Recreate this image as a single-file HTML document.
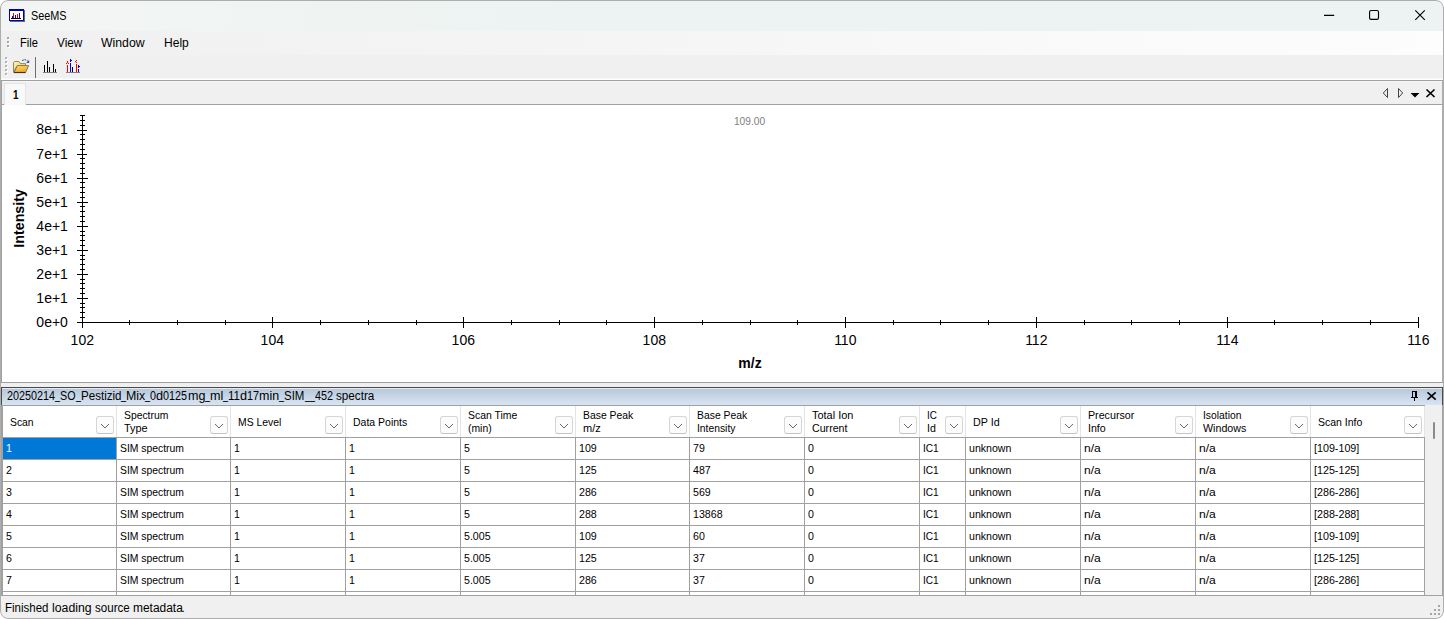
<!DOCTYPE html>
<html><head><meta charset="utf-8"><title>SeeMS</title><style>
html,body{margin:0;padding:0;background:#fff;}
body{width:1444px;height:619px;overflow:hidden;position:relative;font-family:"Liberation Sans",sans-serif;}
#win{position:absolute;left:0;top:0;width:1444px;height:619px;border-radius:8px;overflow:hidden;background:#f0f0f0;}
#ring{position:absolute;left:0;top:0;width:1442px;height:617px;border:1px solid #adadad;border-radius:8px;z-index:20}
.a{position:absolute;display:block}
.r{display:inline-block;white-space:pre;transform-origin:0 50%}
.t{position:absolute;white-space:pre;transform-origin:0 50%;display:block;z-index:3}
#titlebar{position:absolute;left:0;top:0;width:1444px;height:31px;background:linear-gradient(90deg,#f3f5f4 0,#eff4f3 22%,#edf3f2 40%,#edf3f2 100%)}
#menubar{position:absolute;left:0;top:31px;width:1444px;height:24px;background:linear-gradient(90deg,#f0f0f0,#f6f6f6 50%,#fdfdfd)}
#toolbar{position:absolute;left:0;top:55px;width:1444px;height:25px;background:linear-gradient(180deg,#f0f0f0 0,#f0f0f0 23px,#f5f8fb 23px,#f5f8fb 24px,#fff 24px)}
#tabstrip{position:absolute;left:1px;top:80px;width:1442px;height:25px;background:linear-gradient(180deg,#f7f7f7 0,#f7f7f7 1px,#f0f0f0 1px);border:1px solid #a0a0a0;border-right-color:#adadad;box-sizing:border-box}
#tab{position:absolute;left:4px;top:83px;width:20px;height:21px;background:#f9f9f9;border:1px solid #e4e4e4;border-bottom:0}
#chart{position:absolute;left:1px;top:105px;width:1442px;height:278px;box-sizing:border-box;background:#fff;border:1px solid #a0a0a0;border-top:0;border-right-color:#adadad}
#split{position:absolute;left:1px;top:383px;width:1442px;height:4px;background:#f0f0f0}
#cap{position:absolute;left:1px;top:387px;width:1442px;height:18px;box-sizing:border-box;border:1px solid #4a4a4a;border-bottom:0;background:linear-gradient(180deg,#e4ebf4 0,#e4ebf4 1px,#b9c9da 1px,#d7e4f2 100%)}
#gridwrap{position:absolute;left:1px;top:405px;width:1442px;height:190px;background:#a0a0a0}
#grid{position:absolute;left:3px;top:405px;width:1422px;height:190px;box-sizing:border-box;border-top:1px solid #a0a0a0;background:#fff}
.dd{position:absolute;top:416px;width:16px;height:16px;border:1px solid #d6d6d6;border-bottom-color:#c4c4c4;border-radius:3px;background:#fcfcfc}
#status{position:absolute;left:1px;top:595px;width:1442px;height:23px;box-sizing:border-box;border-top:1px solid #a0a0a0;background:#f0f0f0}
</style></head><body>
<div id="win">
<div id="titlebar"></div><div id="menubar"></div><div id="toolbar"></div>
<svg class="a" style="left:9px;top:9px" width="16" height="13" shape-rendering="crispEdges">
<rect x="1" y="1" width="15" height="12" fill="#6a6a6a"/>
<rect x="0" y="0" width="15" height="12" fill="#0000b8"/>
<rect x="1" y="2" width="13" height="9" fill="#fff"/>
<rect x="2" y="9" width="10" height="1" fill="#000"/>
<rect x="3" y="7" width="1" height="2" fill="#00f"/>
<rect x="4" y="4" width="1" height="5" fill="#f00"/>
<rect x="6" y="6" width="1" height="3" fill="#00f"/>
<rect x="8" y="5" width="1" height="4" fill="#f00"/>
<rect x="10" y="4" width="1" height="5" fill="#00f"/>
</svg>
<span class="t" style="left:31px;top:9.84px;font-size:12px;line-height:12px;height:12px;font-weight:400;color:#000;transform:scaleX(0.904);">SeeMS</span>
<svg class="a" style="left:1310px;top:0" width="130" height="31" fill="none" stroke="#000" stroke-width="1.15">
<path d="M14 15.4H24.2"/>
<rect x="59.55" y="10.5" width="8.95" height="8.9" rx="1.6"/>
<path d="M105.3 10.3L114.8 19.8M114.8 10.3L105.3 19.8"/>
</svg>
<svg class="a" style="left:0;top:31px" width="12" height="24" shape-rendering="crispEdges"><rect x="8" y="7" width="2" height="2" fill="#fff"/><rect x="7" y="6" width="2" height="2" fill="#a8a8a8"/><rect x="8" y="11" width="2" height="2" fill="#fff"/><rect x="7" y="10" width="2" height="2" fill="#a8a8a8"/><rect x="8" y="15" width="2" height="2" fill="#fff"/><rect x="7" y="14" width="2" height="2" fill="#a8a8a8"/></svg>
<span class="t" style="left:20px;top:36.84px;font-size:12px;line-height:12px;height:12px;font-weight:400;color:#000;transform:scaleX(0.928);">File</span>
<span class="t" style="left:57px;top:36.84px;font-size:12px;line-height:12px;height:12px;font-weight:400;color:#000;transform:scaleX(0.980);">View</span>
<span class="t" style="left:101px;top:36.84px;font-size:12px;line-height:12px;height:12px;font-weight:400;color:#000;transform:scaleX(1.022);">Window</span>
<span class="t" style="left:164px;top:36.84px;font-size:12px;line-height:12px;height:12px;font-weight:400;color:#000;transform:scaleX(1.003);">Help</span>
<svg class="a" style="left:0;top:55px" width="12" height="25" shape-rendering="crispEdges"><rect x="6" y="3" width="2" height="2" fill="#fff"/><rect x="5" y="2" width="2" height="2" fill="#c2c2c2"/><rect x="6" y="2" width="1" height="1" fill="#a6a6a6"/><rect x="5" y="3" width="1" height="1" fill="#a6a6a6"/><rect x="6" y="7" width="2" height="2" fill="#fff"/><rect x="5" y="6" width="2" height="2" fill="#c2c2c2"/><rect x="6" y="6" width="1" height="1" fill="#a6a6a6"/><rect x="5" y="7" width="1" height="1" fill="#a6a6a6"/><rect x="6" y="11" width="2" height="2" fill="#fff"/><rect x="5" y="10" width="2" height="2" fill="#c2c2c2"/><rect x="6" y="10" width="1" height="1" fill="#a6a6a6"/><rect x="5" y="11" width="1" height="1" fill="#a6a6a6"/><rect x="6" y="15" width="2" height="2" fill="#fff"/><rect x="5" y="14" width="2" height="2" fill="#c2c2c2"/><rect x="6" y="14" width="1" height="1" fill="#a6a6a6"/><rect x="5" y="15" width="1" height="1" fill="#a6a6a6"/><rect x="6" y="19" width="2" height="2" fill="#fff"/><rect x="5" y="18" width="2" height="2" fill="#c2c2c2"/><rect x="6" y="18" width="1" height="1" fill="#a6a6a6"/><rect x="5" y="19" width="1" height="1" fill="#a6a6a6"/></svg>
<svg class="a" style="left:13px;top:58px" width="17" height="16">
<defs><linearGradient id="fg" x1="0" y1="0" x2="0.3" y2="1"><stop offset="0" stop-color="#ffdf70"/><stop offset="1" stop-color="#f0a62a"/></linearGradient>
<linearGradient id="fb" x1="0" y1="0" x2="1" y2="1"><stop offset="0" stop-color="#fff4a8"/><stop offset="1" stop-color="#f2cc58"/></linearGradient></defs>
<path d="M0.5 14.3V4.3L1.3 3.5H6L7.3 5.6H12.5V8H4L0.5 14.3Z" fill="url(#fb)" stroke="#968663" stroke-width="1"/>
<path d="M4.3 7.6H15.6L12.5 14.4H1Z" fill="url(#fg)" stroke="#85754f" stroke-width="1"/>
<path d="M1 14.6H12.6" stroke="#2a2418" stroke-width="0.9"/>
<path d="M9.3 2.9C10.6 1.2 13 1.2 14.6 3.2" fill="none" stroke="#3f5f9c" stroke-width="1.1" stroke-dasharray="1.6 0.9"/>
<path d="M16.2 2L16.2 4.9L13.1 4.9Z" fill="#34508e"/>
</svg>
<div class="a" style="left:35px;top:57px;width:1px;height:21px;background:#6e6e6e"></div>
<svg class="a" style="left:43px;top:55px" width="16" height="25" shape-rendering="crispEdges"><rect x="0" y="17" width="14" height="1" fill="#808080"/><rect x="1" y="10" width="1" height="7" fill="#000"/><rect x="4" y="6" width="1" height="11" fill="#000"/><rect x="6" y="12" width="1" height="5" fill="#000"/><rect x="10" y="9" width="1" height="8" fill="#000"/><rect x="12" y="14" width="1" height="3" fill="#000"/></svg>
<svg class="a" style="left:65px;top:55px" width="17" height="25" shape-rendering="crispEdges"><rect x="1" y="17" width="14" height="1" fill="#808080"/><rect x="2" y="10" width="1" height="7" fill="#f00"/><rect x="5" y="8" width="1" height="9" fill="#00f"/><rect x="7" y="12" width="1" height="5" fill="#000"/><rect x="11" y="9" width="1" height="8" fill="#f00"/><rect x="13" y="14" width="1" height="3" fill="#00f"/><rect x="2" y="6" width="1" height="2" fill="#f00"/><rect x="1" y="8" width="1" height="1" fill="#f00"/><rect x="3" y="8" width="1" height="1" fill="#f00"/><rect x="5" y="4" width="1" height="3" fill="#00f"/><rect x="6" y="5" width="1" height="1" fill="#00f"/><rect x="11" y="5" width="1" height="1" fill="#f00"/><rect x="10" y="6" width="1" height="1" fill="#f00"/><rect x="11" y="7" width="1" height="1" fill="#f00"/><rect x="13" y="10" width="1" height="3" fill="#00f"/><rect x="14" y="11" width="1" height="1" fill="#00f"/></svg>
<div id="tabstrip"></div><div id="tab"></div>
<span class="t" style="left:12.5px;top:88.84px;font-size:12px;line-height:12px;height:12px;font-weight:700;color:#000;transform:scaleX(0.822);">1</span>
<svg class="a" style="left:1380px;top:84px" width="60" height="18">
<path d="M7.5 4.5V13.5L3.3 9Z" fill="none" stroke="#444" stroke-width="1"/>
<path d="M18.5 4.5V13.5L22.7 9Z" fill="none" stroke="#444" stroke-width="1"/>
<path d="M30.6 9H39.4L35 13.4Z" fill="#000"/>
<path d="M46.5 5.5L54.5 13M54.5 5.5L46.5 13" stroke="#000" stroke-width="1.7" fill="none"/>
</svg>
<div id="chart"></div>
<svg class="a" style="left:0;top:105px" width="1444" height="278" font-family="Liberation Sans, sans-serif"><g shape-rendering="crispEdges" fill="#000"><rect x="82" y="10" width="1" height="213"/><rect x="80" y="10" width="5" height="1"/><rect x="77" y="217" width="11" height="1"/><rect x="80" y="212" width="5" height="1"/><rect x="80" y="207" width="5" height="1"/><rect x="80" y="202" width="5" height="1"/><rect x="80" y="198" width="5" height="1"/><rect x="77" y="193" width="11" height="1"/><rect x="80" y="188" width="5" height="1"/><rect x="80" y="183" width="5" height="1"/><rect x="80" y="178" width="5" height="1"/><rect x="80" y="174" width="5" height="1"/><rect x="77" y="169" width="11" height="1"/><rect x="80" y="164" width="5" height="1"/><rect x="80" y="159" width="5" height="1"/><rect x="80" y="154" width="5" height="1"/><rect x="80" y="150" width="5" height="1"/><rect x="77" y="145" width="11" height="1"/><rect x="80" y="140" width="5" height="1"/><rect x="80" y="135" width="5" height="1"/><rect x="80" y="130" width="5" height="1"/><rect x="80" y="126" width="5" height="1"/><rect x="77" y="121" width="11" height="1"/><rect x="80" y="116" width="5" height="1"/><rect x="80" y="111" width="5" height="1"/><rect x="80" y="106" width="5" height="1"/><rect x="80" y="101" width="5" height="1"/><rect x="77" y="97" width="11" height="1"/><rect x="80" y="92" width="5" height="1"/><rect x="80" y="87" width="5" height="1"/><rect x="80" y="82" width="5" height="1"/><rect x="80" y="77" width="5" height="1"/><rect x="77" y="73" width="11" height="1"/><rect x="80" y="68" width="5" height="1"/><rect x="80" y="63" width="5" height="1"/><rect x="80" y="58" width="5" height="1"/><rect x="80" y="53" width="5" height="1"/><rect x="77" y="49" width="10" height="1"/><rect x="80" y="44" width="5" height="1"/><rect x="80" y="39" width="5" height="1"/><rect x="80" y="34" width="5" height="1"/><rect x="80" y="29" width="5" height="1"/><rect x="77" y="25" width="10" height="1"/><rect x="80" y="20" width="5" height="1"/><rect x="80" y="15" width="5" height="1"/><rect x="80" y="10" width="5" height="1"/><rect x="77" y="217" width="1342" height="1"/><rect x="82" y="212" width="1" height="11"/><rect x="129" y="215" width="1" height="5"/><rect x="177" y="215" width="1" height="5"/><rect x="225" y="215" width="1" height="5"/><rect x="272" y="212" width="1" height="11"/><rect x="320" y="215" width="1" height="5"/><rect x="368" y="215" width="1" height="5"/><rect x="416" y="215" width="1" height="5"/><rect x="463" y="212" width="1" height="11"/><rect x="511" y="215" width="1" height="5"/><rect x="559" y="215" width="1" height="5"/><rect x="606" y="215" width="1" height="5"/><rect x="654" y="212" width="1" height="11"/><rect x="702" y="215" width="1" height="5"/><rect x="750" y="215" width="1" height="5"/><rect x="797" y="215" width="1" height="5"/><rect x="845" y="212" width="1" height="11"/><rect x="893" y="215" width="1" height="5"/><rect x="940" y="215" width="1" height="5"/><rect x="988" y="215" width="1" height="5"/><rect x="1036" y="212" width="1" height="11"/><rect x="1084" y="215" width="1" height="5"/><rect x="1131" y="215" width="1" height="5"/><rect x="1179" y="215" width="1" height="5"/><rect x="1227" y="212" width="1" height="11"/><rect x="1274" y="215" width="1" height="5"/><rect x="1322" y="215" width="1" height="5"/><rect x="1370" y="215" width="1" height="5"/><rect x="1418" y="212" width="1" height="11"/></g><text x="67.9" y="222.4" font-size="14" text-anchor="end">0e+0</text><text x="67.9" y="198.4" font-size="14" text-anchor="end">1e+1</text><text x="67.9" y="174.4" font-size="14" text-anchor="end">2e+1</text><text x="67.9" y="150.4" font-size="14" text-anchor="end">3e+1</text><text x="67.9" y="126.4" font-size="14" text-anchor="end">4e+1</text><text x="67.9" y="102.4" font-size="14" text-anchor="end">5e+1</text><text x="67.9" y="78.4" font-size="14" text-anchor="end">6e+1</text><text x="67.9" y="54.4" font-size="14" text-anchor="end">7e+1</text><text x="67.9" y="29.4" font-size="14" text-anchor="end">8e+1</text><text x="82.3" y="240" font-size="14" text-anchor="middle">102</text><text x="272.3" y="240" font-size="14" text-anchor="middle">104</text><text x="463.3" y="240" font-size="14" text-anchor="middle">106</text><text x="654.3" y="240" font-size="14" text-anchor="middle">108</text><text x="845.3" y="240" font-size="14" text-anchor="middle">110</text><text x="1036.3" y="240" font-size="14" text-anchor="middle">112</text><text x="1227.3" y="240" font-size="14" text-anchor="middle">114</text><text x="1418.3" y="240" font-size="14" text-anchor="middle">116</text><text x="750" y="262.7" font-size="14" font-weight="700" text-anchor="middle">m/z</text><text x="749.5" y="20" font-size="10" fill="#808080" text-anchor="middle" textLength="31.2" lengthAdjust="spacingAndGlyphs">109.00</text><text transform="translate(24,113.4) rotate(-90)" font-size="14.3" font-weight="700" text-anchor="middle">Intensity</text></svg>
<div id="split"></div><div id="cap"></div>
<span class="t" style="left:7px;top:389.84px;font-size:12px;line-height:12px;height:12px;font-weight:400;color:#000"><span class="r" style="transform:scaleX(0.901);margin-right:-5.29px">20250214</span><span class="r" style="transform:scaleX(0.746);margin-right:-1.70px;position:relative;top:-1px">_</span><span class="r" style="transform:scaleX(0.891);margin-right:-1.89px">SO</span><span class="r" style="transform:scaleX(0.746);margin-right:-1.70px;position:relative;top:-1px">_</span><span class="r" style="transform:scaleX(0.965);margin-right:-1.47px">Pestizid</span><span class="r" style="transform:scaleX(0.746);margin-right:-1.70px;position:relative;top:-1px">_</span><span class="r" style="transform:scaleX(1.030);margin-right:0.56px">Mix</span><span class="r" style="transform:scaleX(0.746);margin-right:-1.70px;position:relative;top:-1px">_</span><span class="r" style="transform:scaleX(0.899);margin-right:-0.67px">0</span><span class="r" style="transform:scaleX(1.059);margin-right:0.39px">d</span><span class="r" style="transform:scaleX(0.901);margin-right:-2.65px">0125</span><span class="r" style="transform:scaleX(1.047);margin-right:0.79px">mg</span><span class="r" style="transform:scaleX(0.746);margin-right:-1.70px;position:relative;top:-1px">_</span><span class="r" style="transform:scaleX(1.049);margin-right:0.62px">ml</span><span class="r" style="transform:scaleX(0.746);margin-right:-1.70px;position:relative;top:-1px">_</span><span class="r" style="transform:scaleX(0.964);margin-right:-0.44px">11</span><span class="r" style="transform:scaleX(1.059);margin-right:0.39px">d</span><span class="r" style="transform:scaleX(0.900);margin-right:-1.33px">17</span><span class="r" style="transform:scaleX(1.039);margin-right:0.75px">min</span><span class="r" style="transform:scaleX(0.746);margin-right:-1.70px;position:relative;top:-1px">_</span><span class="r" style="transform:scaleX(0.955);margin-right:-0.96px">SIM</span><span class="r" style="transform:scaleX(0.746);margin-right:-1.70px;position:relative;top:-1px">_</span><span class="r" style="transform:scaleX(0.746);margin-right:-1.70px;position:relative;top:-1px">_</span><span class="r" style="transform:scaleX(0.901);margin-right:-1.99px">452</span><span class="r" style="transform:scaleX(0.985);margin-right:-0.05px"> </span><span class="r" style="transform:scaleX(0.975);margin-right:-0.97px">spectra</span></span>
<svg class="a" style="left:1406px;top:389px" width="34" height="15">
<g shape-rendering="crispEdges" fill="#000"><rect x="6" y="2" width="5" height="1"/><rect x="6" y="2" width="1" height="6"/><rect x="9" y="2" width="2" height="6"/><rect x="5" y="8" width="7" height="1"/><rect x="8" y="9" width="1" height="3"/></g>
<path d="M21.5 3.4L29.7 10.7M29.7 3.4L21.5 10.7" stroke="#000" stroke-width="1.6" fill="none"/>
</svg>
<div id="gridwrap"></div><div id="grid"></div>
<div class="a" style="left:116px;top:406px;width:1px;height:31px;background:#e4e4e4"></div>
<div class="dd" style="left:96px"></div>
<svg class="a" style="left:96px;top:416px" width="18" height="18"><path d="M5 8L9 12L13 8" fill="none" stroke="#6a6a6a" stroke-width="1"/></svg>
<span class="t" style="left:10px;top:416.69px;font-size:11px;line-height:11px;height:11px;font-weight:400;color:#000;transform:scaleX(0.943);">Scan</span>
<div class="a" style="left:230px;top:406px;width:1px;height:31px;background:#e4e4e4"></div>
<div class="dd" style="left:210px"></div>
<svg class="a" style="left:210px;top:416px" width="18" height="18"><path d="M5 8L9 12L13 8" fill="none" stroke="#6a6a6a" stroke-width="1"/></svg>
<span class="t" style="left:124px;top:409.69px;font-size:11px;line-height:11px;height:11px;font-weight:400;color:#000;transform:scaleX(0.942);">Spectrum</span>
<span class="t" style="left:124px;top:422.69px;font-size:11px;line-height:11px;height:11px;font-weight:400;color:#000;transform:scaleX(0.991);">Type</span>
<div class="a" style="left:345px;top:406px;width:1px;height:31px;background:#e4e4e4"></div>
<div class="dd" style="left:325px"></div>
<svg class="a" style="left:325px;top:416px" width="18" height="18"><path d="M5 8L9 12L13 8" fill="none" stroke="#6a6a6a" stroke-width="1"/></svg>
<span class="t" style="left:238px;top:416.69px;font-size:11px;line-height:11px;height:11px;font-weight:400;color:#000;transform:scaleX(0.945);">MS Level</span>
<div class="a" style="left:460px;top:406px;width:1px;height:31px;background:#e4e4e4"></div>
<div class="dd" style="left:440px"></div>
<svg class="a" style="left:440px;top:416px" width="18" height="18"><path d="M5 8L9 12L13 8" fill="none" stroke="#6a6a6a" stroke-width="1"/></svg>
<span class="t" style="left:353px;top:416.69px;font-size:11px;line-height:11px;height:11px;font-weight:400;color:#000;transform:scaleX(0.953);">Data Points</span>
<div class="a" style="left:575px;top:406px;width:1px;height:31px;background:#e4e4e4"></div>
<div class="dd" style="left:555px"></div>
<svg class="a" style="left:555px;top:416px" width="18" height="18"><path d="M5 8L9 12L13 8" fill="none" stroke="#6a6a6a" stroke-width="1"/></svg>
<span class="t" style="left:468px;top:409.69px;font-size:11px;line-height:11px;height:11px;font-weight:400;color:#000;transform:scaleX(0.948);">Scan Time</span>
<span class="t" style="left:468px;top:422.69px;font-size:11px;line-height:11px;height:11px;font-weight:400;color:#000;transform:scaleX(0.943);">(min)</span>
<div class="a" style="left:689px;top:406px;width:1px;height:31px;background:#e4e4e4"></div>
<div class="dd" style="left:669px"></div>
<svg class="a" style="left:669px;top:416px" width="18" height="18"><path d="M5 8L9 12L13 8" fill="none" stroke="#6a6a6a" stroke-width="1"/></svg>
<span class="t" style="left:583px;top:409.69px;font-size:11px;line-height:11px;height:11px;font-weight:400;color:#000;transform:scaleX(0.944);">Base Peak</span>
<span class="t" style="left:583px;top:422.69px;font-size:11px;line-height:11px;height:11px;font-weight:400;color:#000;transform:scaleX(1.000);">m/z</span>
<div class="a" style="left:804px;top:406px;width:1px;height:31px;background:#e4e4e4"></div>
<div class="dd" style="left:784px"></div>
<svg class="a" style="left:784px;top:416px" width="18" height="18"><path d="M5 8L9 12L13 8" fill="none" stroke="#6a6a6a" stroke-width="1"/></svg>
<span class="t" style="left:697px;top:409.69px;font-size:11px;line-height:11px;height:11px;font-weight:400;color:#000;transform:scaleX(0.944);">Base Peak</span>
<span class="t" style="left:697px;top:422.69px;font-size:11px;line-height:11px;height:11px;font-weight:400;color:#000;transform:scaleX(0.938);">Intensity</span>
<div class="a" style="left:919px;top:406px;width:1px;height:31px;background:#e4e4e4"></div>
<div class="dd" style="left:899px"></div>
<svg class="a" style="left:899px;top:416px" width="18" height="18"><path d="M5 8L9 12L13 8" fill="none" stroke="#6a6a6a" stroke-width="1"/></svg>
<span class="t" style="left:812px;top:409.69px;font-size:11px;line-height:11px;height:11px;font-weight:400;color:#000;transform:scaleX(0.995);">Total Ion</span>
<span class="t" style="left:812px;top:422.69px;font-size:11px;line-height:11px;height:11px;font-weight:400;color:#000;transform:scaleX(0.967);">Current</span>
<div class="a" style="left:965px;top:406px;width:1px;height:31px;background:#e4e4e4"></div>
<div class="dd" style="left:945px"></div>
<svg class="a" style="left:945px;top:416px" width="18" height="18"><path d="M5 8L9 12L13 8" fill="none" stroke="#6a6a6a" stroke-width="1"/></svg>
<span class="t" style="left:927px;top:409.69px;font-size:11px;line-height:11px;height:11px;font-weight:400;color:#000;transform:scaleX(0.895);">IC</span>
<span class="t" style="left:927px;top:422.69px;font-size:11px;line-height:11px;height:11px;font-weight:400;color:#000;transform:scaleX(0.965);">Id</span>
<div class="a" style="left:1080px;top:406px;width:1px;height:31px;background:#e4e4e4"></div>
<div class="dd" style="left:1060px"></div>
<svg class="a" style="left:1060px;top:416px" width="18" height="18"><path d="M5 8L9 12L13 8" fill="none" stroke="#6a6a6a" stroke-width="1"/></svg>
<span class="t" style="left:973px;top:416.69px;font-size:11px;line-height:11px;height:11px;font-weight:400;color:#000;transform:scaleX(0.974);">DP Id</span>
<div class="a" style="left:1195px;top:406px;width:1px;height:31px;background:#e4e4e4"></div>
<div class="dd" style="left:1175px"></div>
<svg class="a" style="left:1175px;top:416px" width="18" height="18"><path d="M5 8L9 12L13 8" fill="none" stroke="#6a6a6a" stroke-width="1"/></svg>
<span class="t" style="left:1088px;top:409.69px;font-size:11px;line-height:11px;height:11px;font-weight:400;color:#000;transform:scaleX(0.971);">Precursor</span>
<span class="t" style="left:1088px;top:422.69px;font-size:11px;line-height:11px;height:11px;font-weight:400;color:#000;transform:scaleX(0.966);">Info</span>
<div class="a" style="left:1310px;top:406px;width:1px;height:31px;background:#e4e4e4"></div>
<div class="dd" style="left:1290px"></div>
<svg class="a" style="left:1290px;top:416px" width="18" height="18"><path d="M5 8L9 12L13 8" fill="none" stroke="#6a6a6a" stroke-width="1"/></svg>
<span class="t" style="left:1203px;top:409.69px;font-size:11px;line-height:11px;height:11px;font-weight:400;color:#000;transform:scaleX(0.937);">Isolation</span>
<span class="t" style="left:1203px;top:422.69px;font-size:11px;line-height:11px;height:11px;font-weight:400;color:#000;transform:scaleX(0.971);">Windows</span>
<div class="a" style="left:1424px;top:406px;width:1px;height:31px;background:#e4e4e4"></div>
<div class="dd" style="left:1404px"></div>
<svg class="a" style="left:1404px;top:416px" width="18" height="18"><path d="M5 8L9 12L13 8" fill="none" stroke="#6a6a6a" stroke-width="1"/></svg>
<span class="t" style="left:1318px;top:416.69px;font-size:11px;line-height:11px;height:11px;font-weight:400;color:#000;transform:scaleX(0.954);">Scan Info</span>
<div class="a" style="left:3px;top:437px;width:1422px;height:1px;background:#a0a0a0"></div>
<div class="a" style="left:3px;top:459px;width:1422px;height:1px;background:#a0a0a0"></div>
<span class="t" style="left:6px;top:443.29px;font-size:11px;line-height:11px;height:11px;font-weight:400;color:#fff;transform:scaleX(0.965);">1</span>
<span class="t" style="left:120px;top:443.29px;font-size:11px;line-height:11px;height:11px;font-weight:400;color:#000;transform:scaleX(0.943);">SIM spectrum</span>
<span class="t" style="left:234px;top:443.29px;font-size:11px;line-height:11px;height:11px;font-weight:400;color:#000;transform:scaleX(0.965);">1</span>
<span class="t" style="left:349px;top:443.29px;font-size:11px;line-height:11px;height:11px;font-weight:400;color:#000;transform:scaleX(0.965);">1</span>
<span class="t" style="left:464px;top:443.29px;font-size:11px;line-height:11px;height:11px;font-weight:400;color:#000;transform:scaleX(0.965);">5</span>
<span class="t" style="left:579px;top:443.29px;font-size:11px;line-height:11px;height:11px;font-weight:400;color:#000;transform:scaleX(0.966);">109</span>
<span class="t" style="left:693px;top:443.29px;font-size:11px;line-height:11px;height:11px;font-weight:400;color:#000;transform:scaleX(0.965);">79</span>
<span class="t" style="left:808px;top:443.29px;font-size:11px;line-height:11px;height:11px;font-weight:400;color:#000;transform:scaleX(0.965);">0</span>
<span class="t" style="left:923px;top:443.29px;font-size:11px;line-height:11px;height:11px;font-weight:400;color:#000;transform:scaleX(0.920);">IC1</span>
<span class="t" style="left:969px;top:443.29px;font-size:11px;line-height:11px;height:11px;font-weight:400;color:#000;transform:scaleX(0.962);">unknown</span>
<span class="t" style="left:1084px;top:443.29px;font-size:11px;line-height:11px;height:11px;font-weight:400;color:#000;transform:scaleX(1.095);">n/a</span>
<span class="t" style="left:1199px;top:443.29px;font-size:11px;line-height:11px;height:11px;font-weight:400;color:#000;transform:scaleX(1.095);">n/a</span>
<span class="t" style="left:1314px;top:443.29px;font-size:11px;line-height:11px;height:11px;font-weight:400;color:#000;transform:scaleX(0.975);">[109-109]</span>
<div class="a" style="left:3px;top:481px;width:1422px;height:1px;background:#a0a0a0"></div>
<span class="t" style="left:6px;top:465.29px;font-size:11px;line-height:11px;height:11px;font-weight:400;color:#000;transform:scaleX(0.965);">2</span>
<span class="t" style="left:120px;top:465.29px;font-size:11px;line-height:11px;height:11px;font-weight:400;color:#000;transform:scaleX(0.943);">SIM spectrum</span>
<span class="t" style="left:234px;top:465.29px;font-size:11px;line-height:11px;height:11px;font-weight:400;color:#000;transform:scaleX(0.965);">1</span>
<span class="t" style="left:349px;top:465.29px;font-size:11px;line-height:11px;height:11px;font-weight:400;color:#000;transform:scaleX(0.965);">1</span>
<span class="t" style="left:464px;top:465.29px;font-size:11px;line-height:11px;height:11px;font-weight:400;color:#000;transform:scaleX(0.965);">5</span>
<span class="t" style="left:579px;top:465.29px;font-size:11px;line-height:11px;height:11px;font-weight:400;color:#000;transform:scaleX(0.966);">125</span>
<span class="t" style="left:693px;top:465.29px;font-size:11px;line-height:11px;height:11px;font-weight:400;color:#000;transform:scaleX(0.966);">487</span>
<span class="t" style="left:808px;top:465.29px;font-size:11px;line-height:11px;height:11px;font-weight:400;color:#000;transform:scaleX(0.965);">0</span>
<span class="t" style="left:923px;top:465.29px;font-size:11px;line-height:11px;height:11px;font-weight:400;color:#000;transform:scaleX(0.920);">IC1</span>
<span class="t" style="left:969px;top:465.29px;font-size:11px;line-height:11px;height:11px;font-weight:400;color:#000;transform:scaleX(0.962);">unknown</span>
<span class="t" style="left:1084px;top:465.29px;font-size:11px;line-height:11px;height:11px;font-weight:400;color:#000;transform:scaleX(1.095);">n/a</span>
<span class="t" style="left:1199px;top:465.29px;font-size:11px;line-height:11px;height:11px;font-weight:400;color:#000;transform:scaleX(1.095);">n/a</span>
<span class="t" style="left:1314px;top:465.29px;font-size:11px;line-height:11px;height:11px;font-weight:400;color:#000;transform:scaleX(0.975);">[125-125]</span>
<div class="a" style="left:3px;top:503px;width:1422px;height:1px;background:#a0a0a0"></div>
<span class="t" style="left:6px;top:487.29px;font-size:11px;line-height:11px;height:11px;font-weight:400;color:#000;transform:scaleX(0.965);">3</span>
<span class="t" style="left:120px;top:487.29px;font-size:11px;line-height:11px;height:11px;font-weight:400;color:#000;transform:scaleX(0.943);">SIM spectrum</span>
<span class="t" style="left:234px;top:487.29px;font-size:11px;line-height:11px;height:11px;font-weight:400;color:#000;transform:scaleX(0.965);">1</span>
<span class="t" style="left:349px;top:487.29px;font-size:11px;line-height:11px;height:11px;font-weight:400;color:#000;transform:scaleX(0.965);">1</span>
<span class="t" style="left:464px;top:487.29px;font-size:11px;line-height:11px;height:11px;font-weight:400;color:#000;transform:scaleX(0.965);">5</span>
<span class="t" style="left:579px;top:487.29px;font-size:11px;line-height:11px;height:11px;font-weight:400;color:#000;transform:scaleX(0.966);">286</span>
<span class="t" style="left:693px;top:487.29px;font-size:11px;line-height:11px;height:11px;font-weight:400;color:#000;transform:scaleX(0.966);">569</span>
<span class="t" style="left:808px;top:487.29px;font-size:11px;line-height:11px;height:11px;font-weight:400;color:#000;transform:scaleX(0.965);">0</span>
<span class="t" style="left:923px;top:487.29px;font-size:11px;line-height:11px;height:11px;font-weight:400;color:#000;transform:scaleX(0.920);">IC1</span>
<span class="t" style="left:969px;top:487.29px;font-size:11px;line-height:11px;height:11px;font-weight:400;color:#000;transform:scaleX(0.962);">unknown</span>
<span class="t" style="left:1084px;top:487.29px;font-size:11px;line-height:11px;height:11px;font-weight:400;color:#000;transform:scaleX(1.095);">n/a</span>
<span class="t" style="left:1199px;top:487.29px;font-size:11px;line-height:11px;height:11px;font-weight:400;color:#000;transform:scaleX(1.095);">n/a</span>
<span class="t" style="left:1314px;top:487.29px;font-size:11px;line-height:11px;height:11px;font-weight:400;color:#000;transform:scaleX(0.975);">[286-286]</span>
<div class="a" style="left:3px;top:525px;width:1422px;height:1px;background:#a0a0a0"></div>
<span class="t" style="left:6px;top:509.29px;font-size:11px;line-height:11px;height:11px;font-weight:400;color:#000;transform:scaleX(0.965);">4</span>
<span class="t" style="left:120px;top:509.29px;font-size:11px;line-height:11px;height:11px;font-weight:400;color:#000;transform:scaleX(0.943);">SIM spectrum</span>
<span class="t" style="left:234px;top:509.29px;font-size:11px;line-height:11px;height:11px;font-weight:400;color:#000;transform:scaleX(0.965);">1</span>
<span class="t" style="left:349px;top:509.29px;font-size:11px;line-height:11px;height:11px;font-weight:400;color:#000;transform:scaleX(0.965);">1</span>
<span class="t" style="left:464px;top:509.29px;font-size:11px;line-height:11px;height:11px;font-weight:400;color:#000;transform:scaleX(0.965);">5</span>
<span class="t" style="left:579px;top:509.29px;font-size:11px;line-height:11px;height:11px;font-weight:400;color:#000;transform:scaleX(0.966);">288</span>
<span class="t" style="left:693px;top:509.29px;font-size:11px;line-height:11px;height:11px;font-weight:400;color:#000;transform:scaleX(0.966);">13868</span>
<span class="t" style="left:808px;top:509.29px;font-size:11px;line-height:11px;height:11px;font-weight:400;color:#000;transform:scaleX(0.965);">0</span>
<span class="t" style="left:923px;top:509.29px;font-size:11px;line-height:11px;height:11px;font-weight:400;color:#000;transform:scaleX(0.920);">IC1</span>
<span class="t" style="left:969px;top:509.29px;font-size:11px;line-height:11px;height:11px;font-weight:400;color:#000;transform:scaleX(0.962);">unknown</span>
<span class="t" style="left:1084px;top:509.29px;font-size:11px;line-height:11px;height:11px;font-weight:400;color:#000;transform:scaleX(1.095);">n/a</span>
<span class="t" style="left:1199px;top:509.29px;font-size:11px;line-height:11px;height:11px;font-weight:400;color:#000;transform:scaleX(1.095);">n/a</span>
<span class="t" style="left:1314px;top:509.29px;font-size:11px;line-height:11px;height:11px;font-weight:400;color:#000;transform:scaleX(0.975);">[288-288]</span>
<div class="a" style="left:3px;top:547px;width:1422px;height:1px;background:#a0a0a0"></div>
<span class="t" style="left:6px;top:531.29px;font-size:11px;line-height:11px;height:11px;font-weight:400;color:#000;transform:scaleX(0.965);">5</span>
<span class="t" style="left:120px;top:531.29px;font-size:11px;line-height:11px;height:11px;font-weight:400;color:#000;transform:scaleX(0.943);">SIM spectrum</span>
<span class="t" style="left:234px;top:531.29px;font-size:11px;line-height:11px;height:11px;font-weight:400;color:#000;transform:scaleX(0.965);">1</span>
<span class="t" style="left:349px;top:531.29px;font-size:11px;line-height:11px;height:11px;font-weight:400;color:#000;transform:scaleX(0.965);">1</span>
<span class="t" style="left:464px;top:531.29px;font-size:11px;line-height:11px;height:11px;font-weight:400;color:#000;transform:scaleX(0.966);">5.005</span>
<span class="t" style="left:579px;top:531.29px;font-size:11px;line-height:11px;height:11px;font-weight:400;color:#000;transform:scaleX(0.966);">109</span>
<span class="t" style="left:693px;top:531.29px;font-size:11px;line-height:11px;height:11px;font-weight:400;color:#000;transform:scaleX(0.965);">60</span>
<span class="t" style="left:808px;top:531.29px;font-size:11px;line-height:11px;height:11px;font-weight:400;color:#000;transform:scaleX(0.965);">0</span>
<span class="t" style="left:923px;top:531.29px;font-size:11px;line-height:11px;height:11px;font-weight:400;color:#000;transform:scaleX(0.920);">IC1</span>
<span class="t" style="left:969px;top:531.29px;font-size:11px;line-height:11px;height:11px;font-weight:400;color:#000;transform:scaleX(0.962);">unknown</span>
<span class="t" style="left:1084px;top:531.29px;font-size:11px;line-height:11px;height:11px;font-weight:400;color:#000;transform:scaleX(1.095);">n/a</span>
<span class="t" style="left:1199px;top:531.29px;font-size:11px;line-height:11px;height:11px;font-weight:400;color:#000;transform:scaleX(1.095);">n/a</span>
<span class="t" style="left:1314px;top:531.29px;font-size:11px;line-height:11px;height:11px;font-weight:400;color:#000;transform:scaleX(0.975);">[109-109]</span>
<div class="a" style="left:3px;top:569px;width:1422px;height:1px;background:#a0a0a0"></div>
<span class="t" style="left:6px;top:553.29px;font-size:11px;line-height:11px;height:11px;font-weight:400;color:#000;transform:scaleX(0.965);">6</span>
<span class="t" style="left:120px;top:553.29px;font-size:11px;line-height:11px;height:11px;font-weight:400;color:#000;transform:scaleX(0.943);">SIM spectrum</span>
<span class="t" style="left:234px;top:553.29px;font-size:11px;line-height:11px;height:11px;font-weight:400;color:#000;transform:scaleX(0.965);">1</span>
<span class="t" style="left:349px;top:553.29px;font-size:11px;line-height:11px;height:11px;font-weight:400;color:#000;transform:scaleX(0.965);">1</span>
<span class="t" style="left:464px;top:553.29px;font-size:11px;line-height:11px;height:11px;font-weight:400;color:#000;transform:scaleX(0.966);">5.005</span>
<span class="t" style="left:579px;top:553.29px;font-size:11px;line-height:11px;height:11px;font-weight:400;color:#000;transform:scaleX(0.966);">125</span>
<span class="t" style="left:693px;top:553.29px;font-size:11px;line-height:11px;height:11px;font-weight:400;color:#000;transform:scaleX(0.965);">37</span>
<span class="t" style="left:808px;top:553.29px;font-size:11px;line-height:11px;height:11px;font-weight:400;color:#000;transform:scaleX(0.965);">0</span>
<span class="t" style="left:923px;top:553.29px;font-size:11px;line-height:11px;height:11px;font-weight:400;color:#000;transform:scaleX(0.920);">IC1</span>
<span class="t" style="left:969px;top:553.29px;font-size:11px;line-height:11px;height:11px;font-weight:400;color:#000;transform:scaleX(0.962);">unknown</span>
<span class="t" style="left:1084px;top:553.29px;font-size:11px;line-height:11px;height:11px;font-weight:400;color:#000;transform:scaleX(1.095);">n/a</span>
<span class="t" style="left:1199px;top:553.29px;font-size:11px;line-height:11px;height:11px;font-weight:400;color:#000;transform:scaleX(1.095);">n/a</span>
<span class="t" style="left:1314px;top:553.29px;font-size:11px;line-height:11px;height:11px;font-weight:400;color:#000;transform:scaleX(0.975);">[125-125]</span>
<div class="a" style="left:3px;top:591px;width:1422px;height:1px;background:#a0a0a0"></div>
<span class="t" style="left:6px;top:575.29px;font-size:11px;line-height:11px;height:11px;font-weight:400;color:#000;transform:scaleX(0.965);">7</span>
<span class="t" style="left:120px;top:575.29px;font-size:11px;line-height:11px;height:11px;font-weight:400;color:#000;transform:scaleX(0.943);">SIM spectrum</span>
<span class="t" style="left:234px;top:575.29px;font-size:11px;line-height:11px;height:11px;font-weight:400;color:#000;transform:scaleX(0.965);">1</span>
<span class="t" style="left:349px;top:575.29px;font-size:11px;line-height:11px;height:11px;font-weight:400;color:#000;transform:scaleX(0.965);">1</span>
<span class="t" style="left:464px;top:575.29px;font-size:11px;line-height:11px;height:11px;font-weight:400;color:#000;transform:scaleX(0.966);">5.005</span>
<span class="t" style="left:579px;top:575.29px;font-size:11px;line-height:11px;height:11px;font-weight:400;color:#000;transform:scaleX(0.966);">286</span>
<span class="t" style="left:693px;top:575.29px;font-size:11px;line-height:11px;height:11px;font-weight:400;color:#000;transform:scaleX(0.965);">37</span>
<span class="t" style="left:808px;top:575.29px;font-size:11px;line-height:11px;height:11px;font-weight:400;color:#000;transform:scaleX(0.965);">0</span>
<span class="t" style="left:923px;top:575.29px;font-size:11px;line-height:11px;height:11px;font-weight:400;color:#000;transform:scaleX(0.920);">IC1</span>
<span class="t" style="left:969px;top:575.29px;font-size:11px;line-height:11px;height:11px;font-weight:400;color:#000;transform:scaleX(0.962);">unknown</span>
<span class="t" style="left:1084px;top:575.29px;font-size:11px;line-height:11px;height:11px;font-weight:400;color:#000;transform:scaleX(1.095);">n/a</span>
<span class="t" style="left:1199px;top:575.29px;font-size:11px;line-height:11px;height:11px;font-weight:400;color:#000;transform:scaleX(1.095);">n/a</span>
<span class="t" style="left:1314px;top:575.29px;font-size:11px;line-height:11px;height:11px;font-weight:400;color:#000;transform:scaleX(0.975);">[286-286]</span>
<div class="a" style="left:116px;top:437px;width:1px;height:158px;background:#a0a0a0"></div>
<div class="a" style="left:230px;top:437px;width:1px;height:158px;background:#a0a0a0"></div>
<div class="a" style="left:345px;top:437px;width:1px;height:158px;background:#a0a0a0"></div>
<div class="a" style="left:460px;top:437px;width:1px;height:158px;background:#a0a0a0"></div>
<div class="a" style="left:575px;top:437px;width:1px;height:158px;background:#a0a0a0"></div>
<div class="a" style="left:689px;top:437px;width:1px;height:158px;background:#a0a0a0"></div>
<div class="a" style="left:804px;top:437px;width:1px;height:158px;background:#a0a0a0"></div>
<div class="a" style="left:919px;top:437px;width:1px;height:158px;background:#a0a0a0"></div>
<div class="a" style="left:965px;top:437px;width:1px;height:158px;background:#a0a0a0"></div>
<div class="a" style="left:1080px;top:437px;width:1px;height:158px;background:#a0a0a0"></div>
<div class="a" style="left:1195px;top:437px;width:1px;height:158px;background:#a0a0a0"></div>
<div class="a" style="left:1310px;top:437px;width:1px;height:158px;background:#a0a0a0"></div>
<div class="a" style="left:1424px;top:437px;width:1px;height:158px;background:#a0a0a0"></div>
<div class="a" style="left:3px;top:438px;width:113px;height:21px;background:#0078d7"></div>
<div class="a" style="left:1425px;top:405px;width:17px;height:190px;background:#f0f0f0"></div>
<div class="a" style="left:1433px;top:422px;width:2px;height:17px;background:#8a8a8a;border-radius:1px"></div>
<div id="status"></div>
<span class="t" style="left:5px;top:601.84px;font-size:12px;line-height:12px;height:12px;font-weight:400;color:#000"><span class="r" style="transform:scaleX(0.957);margin-right:-1.93px">Finished</span><span class="r" style="transform:scaleX(0.977);margin-right:-0.08px"> </span><span class="r" style="transform:scaleX(1.024);margin-right:0.93px">loading</span><span class="r" style="transform:scaleX(0.977);margin-right:-0.08px"> </span><span class="r" style="transform:scaleX(0.963);margin-right:-1.33px">source</span><span class="r" style="transform:scaleX(0.977);margin-right:-0.08px"> </span><span class="r" style="transform:scaleX(0.996);margin-right:-0.20px">metadata</span><span class="r" style="transform:scaleX(0.773);margin-right:-0.76px">.</span></span>
<svg class="a" style="left:1428px;top:603px" width="14" height="14" shape-rendering="crispEdges" fill="#a6a6a6"><rect x="10" y="2" width="2" height="2"/><rect x="6" y="6" width="2" height="2"/><rect x="10" y="6" width="2" height="2"/><rect x="2" y="10" width="2" height="2"/><rect x="6" y="10" width="2" height="2"/><rect x="10" y="10" width="2" height="2"/></svg>
<div id="ring"></div>
</div>
</body></html>
